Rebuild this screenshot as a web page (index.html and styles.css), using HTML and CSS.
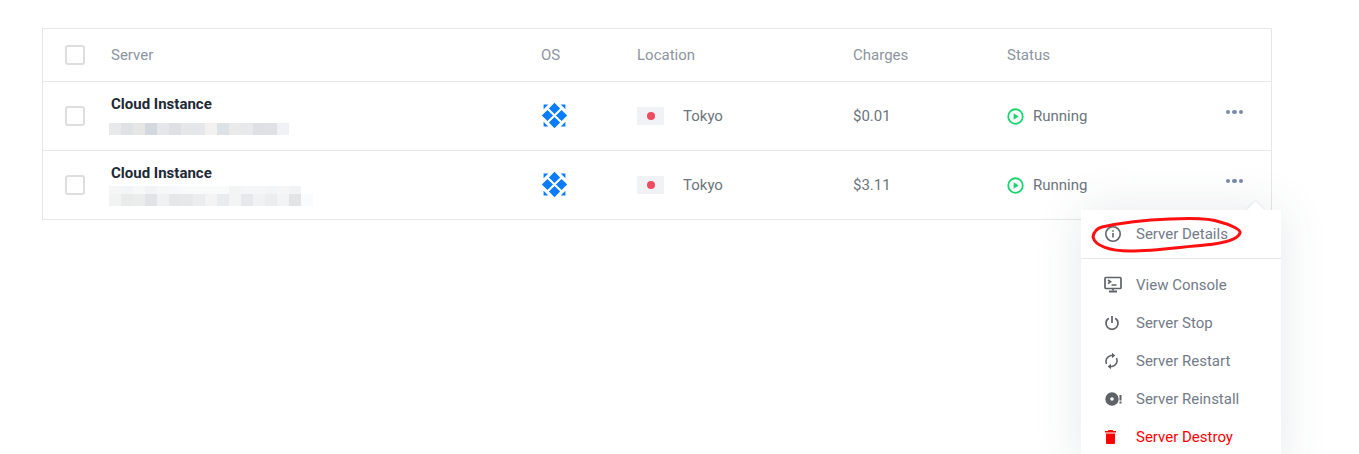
FILE: index.html
```html
<!DOCTYPE html>
<html lang="en">
<head>
    <meta charset="UTF-8">
    <meta name="viewport" content="width=device-width, initial-scale=1.0">
    <title>Servers</title>
    <link rel="stylesheet" href="styles.css">
</head>
<body>
    <div class="server-table">
        <div class="row head">
            <div class="check-cell"><span class="checkbox"></span></div>
            <div>Server</div>
            <div>OS</div>
            <div>Location</div>
            <div>Charges</div>
            <div>Status</div>
        </div>

        <div class="row">
            <div class="check-cell"><span class="checkbox"></span></div>
            <div class="name-cell">
                <strong>Cloud Instance</strong>
                <span class="ip-blur-one"></span>
            </div>
            <div class="os-cell">
                <svg class="os-icon" viewBox="0 0 26 26"><use href="#os-logo"/></svg>
            </div>
            <div class="location-cell"><span class="flag"><i></i></span>Tokyo</div>
            <div>$0.01</div>
            <div class="status-cell">
                <span class="status">
                    <svg class="status-icon" viewBox="0 0 18 18"><use href="#run-icon"/></svg>
                    Running
                </span>
                <span class="dots-wrap"><span class="dots"><i></i><i></i><i></i></span></span>
            </div>
        </div>

        <div class="row">
            <div class="check-cell"><span class="checkbox"></span></div>
            <div class="name-cell">
                <strong>Cloud Instance</strong>
                <span class="ip-blur-two"></span>
                <span class="ip-blur-three"></span>
            </div>
            <div class="os-cell">
                <svg class="os-icon" viewBox="0 0 26 26"><use href="#os-logo"/></svg>
            </div>
            <div class="location-cell"><span class="flag"><i></i></span>Tokyo</div>
            <div>$3.11</div>
            <div class="status-cell">
                <span class="status">
                    <svg class="status-icon" viewBox="0 0 18 18"><use href="#run-icon"/></svg>
                    Running
                </span>
                <span class="dots-wrap">
                    <span class="dots"><i></i><i></i><i></i></span>
                    <div class="menu">
                        <div class="menu-item first">
                            <svg viewBox="0 0 18 18" fill="none" stroke="#5f6368" stroke-width="1.6"><circle cx="9" cy="9" r="7.2"/><path d="M9 8v4.600M9 5.200v1.500"/></svg>
                            Server Details
                        </div>
                        <div class="menu-item">
                            <svg viewBox="0 0 18 18" fill="none" stroke="#5f6368" stroke-width="1.7"><rect x="1" y="1.500" width="16" height="11" rx="1"/><path d="M4 4l2.500 1.800L4 7.600M7.500 9h5M9 12.500v2"/><path d="M5 15.500h8" stroke-width="2"/></svg>
                            View Console
                        </div>
                        <div class="menu-item">
                            <svg viewBox="0 0 18 18" fill="none" stroke="#5f6368" stroke-width="1.7"><path d="M4.800 4.200a6 6 0 1 0 6.400 0M8 2v7"/></svg>
                            Server Stop
                        </div>
                        <div class="menu-item">
                            <svg viewBox="0 0 18 18" fill="none" stroke="#5f6368" stroke-width="1.6"><path d="M2.500 12A6 6 0 0 1 7 3.500H8.500M12.500 6A6 6 0 0 1 8 14.500H6.500"/><path d="M8 .8l3.300 2.700L8 6.200zM7 11.800l-3.300 2.700L7 17.200z" fill="#5f6368" stroke="none"/></svg>
                            Server Restart
                        </div>
                        <div class="menu-item">
                            <svg viewBox="0 0 18 18"><path fill="#5f6368" fill-rule="evenodd" d="M8 2.300a6.700 6.700 0 1 1 0 13.400 6.700 6.700 0 0 1 0-13.400zM8 7.200a1.800 1.800 0 1 0 0 3.600 1.800 1.800 0 0 0 0-3.600z"/><path fill="#5f6368" d="M15.500 5h2v5.500h-2zM15.500 11.500h2v2h-2z"/></svg>
                            Server Reinstall
                        </div>
                        <div class="menu-item danger">
                            <svg viewBox="0 0 18 18"><path fill="#ff0000" d="M4.500 2h4l.7 1H12v1.600H1V3h2.800zM2 5.500h9V15a1 1 0 0 1-1 1H3a1 1 0 0 1-1-1z"/></svg>
                            Server Destroy
                        </div>
                    </div>
                </span>
            </div>
        </div>
    </div>

    <svg class="scribble" viewBox="0 0 154 40" fill="none">
        <path d="M3 21C4 15 8 12 12 11C30 7 55 4 80 3C100 2 120 2 130 6C142 9 151 14 150 17C148 23 136 27 115 29C90 31 65 35 40 35C20 35 5 30 3 21Z" stroke="#ff0f0f" stroke-width="3"/>
    </svg>

    <svg class="defs">
        <symbol id="os-logo" viewBox="0 0 26 26">
            <path fill="#0a7cff" d="M13 .8L18.400 6.200L13 11.600L7.600 6.200zM6.200 7.600L11.600 13L6.200 18.400L.8 13zM19.800 7.600L25.200 13L19.800 18.400L14.400 13zM13 14.400L18.400 19.800L13 25.200L7.600 19.800z"/>
            <path fill="#0a7cff" d="M2.500 2.500H7L2.500 7zM23.500 2.500V7L19 2.500zM2.500 23.500V19L7 23.500zM23.500 23.500H19L23.500 19z"/>
        </symbol>
        <symbol id="run-icon" viewBox="0 0 18 18">
            <circle cx="9" cy="9" r="7.700" fill="none" stroke="#17d66f" stroke-width="1.900"/>
            <path fill="#17d66f" d="M7 5.600L12.400 9L7 12.400z"/>
        </symbol>
    </svg>
</body>
</html>
```

FILE: styles.css
```css
html, body {
    height: 454px;
    overflow: hidden;
}

body {
    margin: 0;
    padding: 28px 0 0 42px;
    box-sizing: border-box;
    position: relative;
    background: #fff;
    font-family: Roboto, "Liberation Sans", sans-serif;
    font-size: 15px;
    color: #6c757d;
}

.server-table {
    width: 1230px;
    box-sizing: border-box;
    border: 1px solid #e7e7e7;
    border-bottom: 0;
}

.row {
    display: grid;
    grid-template-columns: 68px 430px 96px 216px 154px 1fr;
    align-items: center;
    height: 69px;
    box-sizing: border-box;
    border-bottom: 1px solid #e7e7e7;
}

.head {
    height: 53px;
    color: #8d94a0;
}

.check-cell {
    display: flex;
    padding-left: 22px;
}

.checkbox {
    width: 20px;
    height: 20px;
    box-sizing: border-box;
    border: 2px solid #dedede;
    border-radius: 3px;
}

.name-cell {
    align-self: start;
    padding-top: 13px;
    display: flex;
    flex-direction: column;
}

.name-cell strong {
    line-height: 18px;
    font-weight: 700;
    color: #212936;
}

.ip-blur-one {
    width: 180px;
    height: 12px;
    margin: 10px 0 0 -2px;
    background: linear-gradient(90deg,
        #e8e9eb 0 12px, #dfe1e5 12px 24px, #e6e6e6 24px 36px, #d3d7de 36px 48px,
        #e6e7ea 48px 60px, #dee0e4 60px 72px, #e6e7e9 72px 84px, #e5e7ec 84px 96px,
        #f2f1ef 96px 108px, #dde2e6 108px 120px, #ebeaea 120px 132px, #e8e9eb 132px 144px,
        #dfe0e4 144px 156px, #dfe1e5 156px 168px, #f0f1f4 168px 180px);
}

.ip-blur-two {
    width: 192px;
    height: 8px;
    margin: 4px 0 0 -2px;
    background: linear-gradient(90deg,
        #f6f6f7 0 12px, #f3f4f5 12px 24px, #f7f8f8 24px 36px, #f2f3f4 36px 48px,
        #f6f7f7 48px 60px, #f7f8f9 60px 72px, #f9fafa 72px 120px,
        #f3f4f4 120px 132px, #f5f6f7 132px 156px, #f3f4f5 156px 168px, #f6f6f7 168px 180px,
        #f2f3f4 180px 192px);
}

.ip-blur-three {
    width: 204px;
    height: 12px;
    margin-left: -2px;
    background: linear-gradient(90deg,
        #f2f3f3 0 12px, #e9eaea 12px 24px, #ebecec 24px 36px, #e2e3e6 36px 48px,
        #f0f1f2 48px 60px, #e6e7e9 60px 72px, #e7e8e9 72px 84px, #ecedee 84px 96px,
        #f4f4f4 96px 108px, #eaebed 108px 120px, #f3f4f4 120px 132px, #e6e8eb 132px 144px,
        #f1f2f4 144px 156px, #ecedef 156px 168px, #f3f4f5 168px 180px, #e3e4e6 180px 192px,
        #fafbfc 192px 204px);
}

.os-cell {
    display: flex;
}

.os-icon {
    width: 27px;
    height: 27px;
    margin-top: -1px;
    display: block;
}

.location-cell {
    display: flex;
    align-items: center;
    gap: 19px;
}

.flag {
    width: 27px;
    height: 18px;
    display: flex;
    align-items: center;
    justify-content: center;
    background: #f1f2f6;
}

.flag i {
    width: 8px;
    height: 8px;
    border-radius: 50%;
    background: #ef4c5f;
}

.status-cell {
    display: flex;
    align-items: center;
    justify-content: space-between;
    padding-right: 28px;
}

.status {
    display: flex;
    align-items: center;
    gap: 9px;
}

.status-icon {
    width: 17px;
    height: 17px;
}

.dots-wrap {
    position: relative;
    top: -4px;
    display: flex;
}

.dots {
    display: flex;
    gap: 2px;
}

.dots i {
    width: 4.5px;
    height: 4.5px;
    border-radius: 50%;
    background: #7e8aa8;
}

.menu {
    position: absolute;
    top: 31px;
    right: -38px;
    width: 200px;
    height: 260px;
    padding-top: 5px;
    box-sizing: border-box;
    background: #fff;
    box-shadow: 0 0 45px rgba(60, 70, 90, 0.12);
}

.menu::before {
    content: "";
    position: absolute;
    top: -6px;
    right: 19px;
    width: 13px;
    height: 13px;
    background: #fff;
    transform: rotate(45deg);
    box-shadow: -1px -1px 2px rgba(60, 70, 90, 0.08);
}

.menu-item {
    position: relative;
    display: flex;
    align-items: center;
    gap: 14px;
    height: 38px;
    padding-left: 23px;
    color: #737b88;
    white-space: nowrap;
}

.menu-item svg {
    width: 18px;
    height: 18px;
    flex: none;
}

.menu-item.first {
    margin-bottom: 13px;
}

.menu-item.first::after {
    content: "";
    position: absolute;
    left: 0;
    right: 0;
    bottom: -6px;
    border-bottom: 1px solid #e7e7e7;
}

.menu-item.danger {
    color: #ff0000;
}

.scribble {
    position: absolute;
    left: 1090px;
    top: 216px;
    width: 154px;
    height: 40px;
}

.defs {
    position: absolute;
    width: 0;
    height: 0;
}
```
